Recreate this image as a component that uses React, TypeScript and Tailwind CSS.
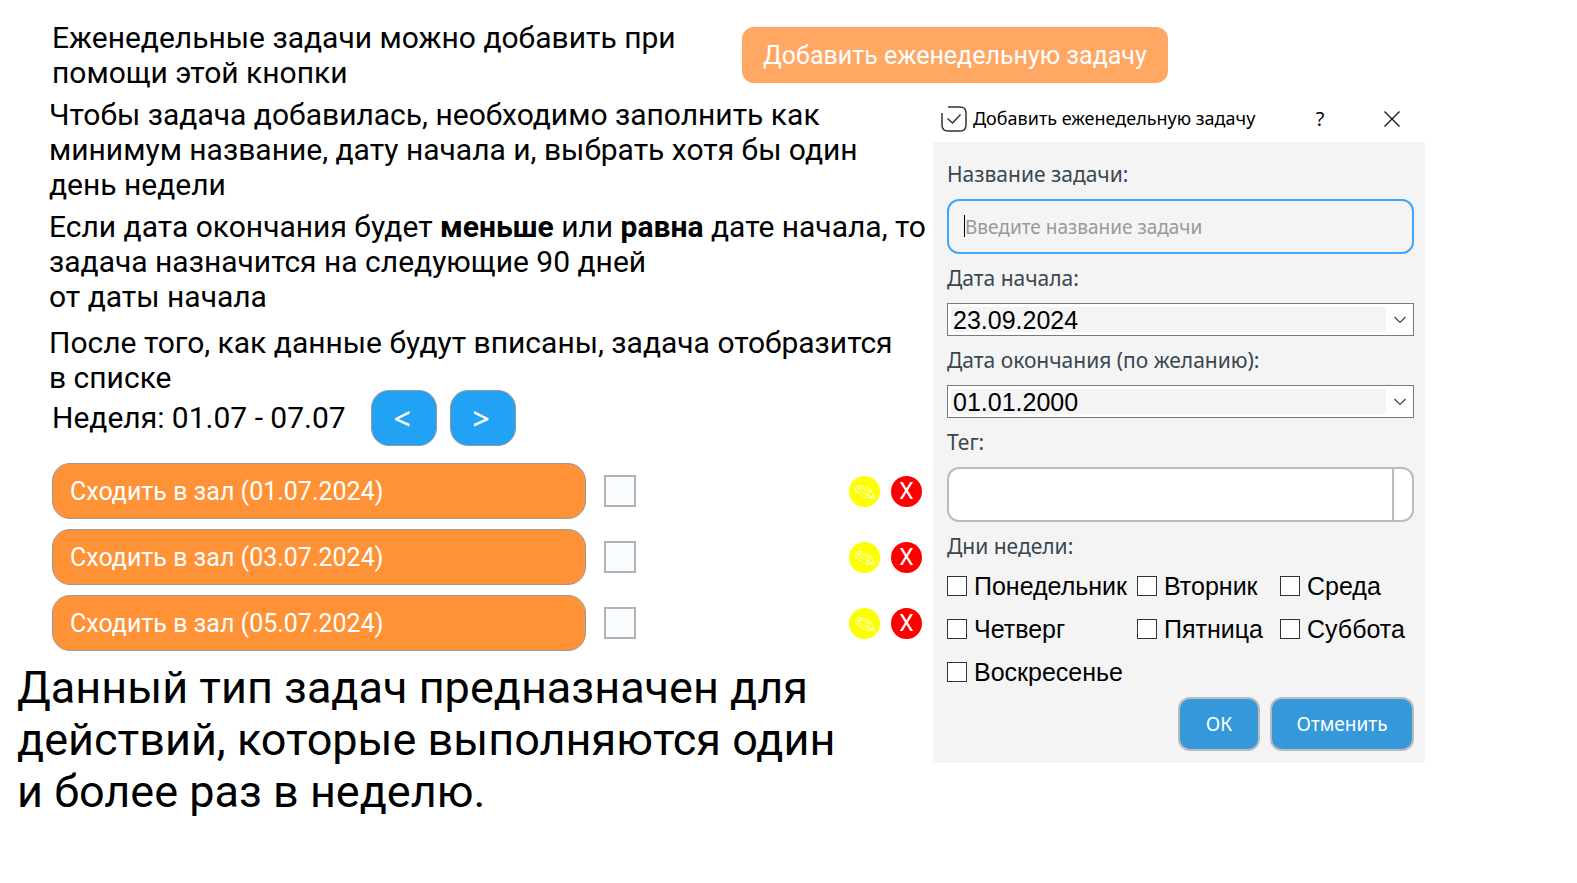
import { useState } from "react";
import type { ReactNode } from "react";

const tasks = [
  { id: "t1", title: "Сходить в зал (01.07.2024)" },
  { id: "t2", title: "Сходить в зал (03.07.2024)" },
  { id: "t3", title: "Сходить в зал (05.07.2024)" },
];

const days = ["Понедельник", "Вторник", "Среда", "Четверг", "Пятница", "Суббота", "Воскресенье"];

function PencilIcon() {
  return (
    <svg viewBox="0 0 32 32" className="size-8" fill="none" stroke="#fff" strokeWidth="0.8" strokeLinejoin="round" aria-hidden="true">
      <path d="M10.5 9.8 L22.5 14.800 L26.500 23.500 L16.500 22.800 L7 16.500 C5.500 13.500 7.500 9.800 10.500 9.800 Z" />
      <path d="M10.500 9.800 C12.500 11 11.500 15.500 7 16.500 M12 12.800 L21.500 17.200 M10.500 15.500 L19 20 M22.500 14.800 L21.500 17.200 L19 20 L16.500 22.800 M19 20 L26.500 23.500 M24.500 20 L23 23" />
      <path d="M8.500 12 L10 14 M10 12 L8.500 14" />
    </svg>
  );
}

function TaskRow({ id, title }: { id: string; title: string }) {
  return (
    <li className="flex items-center">
      <label htmlFor={id} className="flex h-14 w-[534px] items-center rounded-[18px] border border-[#999] bg-[#ff9236] px-[17px] text-[25px] text-white">
        {title}
      </label>
      <input id={id} type="checkbox" className="ml-[18px] size-8 appearance-none border-2 border-[#b2b2b2] bg-[#f8fcff] checked:bg-[#22a2f4]" />
      <div className="ml-auto flex gap-[11px]">
        <button type="button" aria-label="Изменить" className="flex size-[31px] items-center justify-center rounded-full bg-[#fbff00]">
          <PencilIcon />
        </button>
        <button type="button" aria-label="Удалить" className="flex size-[31px] items-center justify-center rounded-full bg-[#ff0000] text-[23px] text-white">
          X
        </button>
      </div>
    </li>
  );
}

function FieldLabel({ htmlFor, children }: { htmlFor?: string; children: ReactNode }) {
  return (
    <label htmlFor={htmlFor} className="flex h-[49px] items-center font-['Noto_Sans',sans-serif] text-[21px] text-[#37474f]">
      {children}
    </label>
  );
}

function DateField({ id, value }: { id: string; value: string }) {
  return (
    <div className="relative h-[33px] border border-[#7a7a7a] bg-white p-[3px]">
      <select id={id} defaultValue={value} className="block h-full w-full appearance-none border-r-[24px] border-white bg-[#f4f4f4] pl-[2px] font-['Liberation_Sans',sans-serif] text-[25px] leading-[27px] text-black outline-none">
        <option>{value}</option>
      </select>
      <svg viewBox="0 0 12 8" className="pointer-events-none absolute top-3 right-[7px] h-2 w-3" fill="none" stroke="#444" strokeWidth="1.2" aria-hidden="true">
        <path d="M0.500 1 L6 6.500 L11.500 1" />
      </svg>
    </div>
  );
}

function WeeklyTaskDialog() {
  const [name, setName] = useState("");
  return (
    <section aria-labelledby="dialog-title" className="w-[492px] shrink-0 font-['Noto_Sans',sans-serif]">
      <header className="flex h-[45px] items-center pb-[2px] pl-2">
        <svg viewBox="0 0 26 26" className="size-[26px]" fill="none" stroke="#333" strokeWidth="1.500" aria-hidden="true">
          <path d="M7 1 H19 Q25 1 25 7 V19 Q25 25 19 25 H7 Q1 25 1 19 V7" />
          <path d="M6.500 12.500 L11.500 17 L19.500 8.500" />
        </svg>
        <h2 id="dialog-title" className="ml-[6px] text-[18px] whitespace-nowrap text-black">
          Добавить еженедельную задачу
        </h2>
        <button type="button" aria-label="Справка" className="ml-auto flex w-[70px] justify-center text-[20px] text-black">
          ?
        </button>
        <button type="button" aria-label="Закрыть" className="flex w-[70px] justify-center pl-1">
          <svg viewBox="0 0 16 16" className="size-4" stroke="#111" strokeWidth="1.300" aria-hidden="true">
            <path d="M0.500 0.500 L15.500 15.500 M15.500 0.500 L0.500 15.500" />
          </svg>
        </button>
      </header>
      <form className="bg-[#f4f4f4] pt-2 pr-[11px] pb-3 pl-[14px]" onSubmit={(e) => e.preventDefault()}>
        <FieldLabel htmlFor="task-name">Название задачи:</FieldLabel>
        <div className="relative">
          <input
            id="task-name"
            value={name}
            onChange={(e) => setName(e.target.value)}
            placeholder="Введите название задачи"
            className="block h-[55px] w-full rounded-xl border-2 border-[#42a5f5] bg-[#f4f4f4] px-4 text-[19px] text-black outline-none placeholder:text-[#999]"
          />
          <span className="absolute top-4 left-[17px] h-[22px] w-px bg-black" />
        </div>
        <FieldLabel htmlFor="date-start">Дата начала:</FieldLabel>
        <DateField id="date-start" value="23.09.2024" />
        <FieldLabel htmlFor="date-end">Дата окончания (по желанию):</FieldLabel>
        <DateField id="date-end" value="01.01.2000" />
        <FieldLabel htmlFor="tag">Тег:</FieldLabel>
        <div className="flex h-[55px] overflow-hidden rounded-xl border-2 border-[#bbb] bg-white">
          <select id="tag" className="flex-1 appearance-none px-4 text-[19px] outline-none">
            <option></option>
          </select>
          <span className="w-5 border-l-2 border-[#bbb]" />
        </div>
        <fieldset>
          <legend className="flex h-12 items-center text-[21px] text-[#37474f]">Дни недели:</legend>
          <div className="grid grid-cols-[190px_143px_1fr] gap-y-[15px] pt-[2px] pb-1 font-['Liberation_Sans',sans-serif] text-[25px] leading-7 text-black">
            {days.map((day) => (
              <label key={day} className="flex h-7 items-center gap-[7px] whitespace-nowrap">
                <input type="checkbox" className="size-5 shrink-0 appearance-none border border-[#333] bg-white checked:bg-[#3498db]" />
                {day}
              </label>
            ))}
          </div>
        </fieldset>
        <div className="mt-[7px] flex justify-end gap-[10px] text-[19px] text-white">
          <button type="submit" className="h-[54px] w-[82px] rounded-xl border-2 border-[#bbb] bg-[#3498db]">
            ОК
          </button>
          <button type="button" className="h-[54px] w-36 rounded-xl border-2 border-[#bbb] bg-[#3498db]">
            Отменить
          </button>
        </div>
      </form>
    </section>
  );
}

export default function App() {
  return (
    <main className="min-h-screen bg-white font-[Roboto,sans-serif] text-[30px] leading-[35px] text-black">
      <div className="flex items-start pt-5 pl-[52px]">
        <p className="w-[690px] shrink-0">
          Еженедельные задачи можно добавить при
          <br />
          помощи этой кнопки
        </p>
        <button type="button" className="mt-[7px] h-14 rounded-xl bg-[#ffa763] px-[21px] text-[25px] whitespace-nowrap text-white">
          Добавить еженедельную задачу
        </button>
      </div>
      <div className="mt-[7px] flex items-start">
        <div className="w-[933px] shrink-0">
          <div className="pl-[49px] whitespace-nowrap">
            <p>
              Чтобы задача добавилась, необходимо заполнить как
              <br />
              минимум название, дату начала и, выбрать хотя бы один
              <br />
              день недели
            </p>
            <p className="mt-[7px]">
              Если дата окончания будет <b>меньше</b> или <b>равна</b> дате начала, то
              <br />
              задача назначится на следующие 90 дней
              <br />
              от даты начала
            </p>
            <p className="mt-[11px]">
              После того, как данные будут вписаны, задача отобразится
              <br />в списке
            </p>
          </div>
          <div className="pr-[11px] pl-[52px]">
            <div className="-mt-[5px] flex items-center gap-[13px]">
              <span className="w-[306px] pb-[2px] whitespace-nowrap">Неделя: 01.07 - 07.07</span>
              <button type="button" aria-label="Предыдущая неделя" className="h-14 w-[66px] rounded-[18px] border border-[#999] bg-[#22a2f4] pr-1 font-['Noto_Sans',sans-serif] font-medium text-white">
                &lt;
              </button>
              <button type="button" aria-label="Следующая неделя" className="h-14 w-[66px] rounded-[18px] border border-[#999] bg-[#22a2f4] pr-1 font-['Noto_Sans',sans-serif] font-medium text-white">
                &gt;
              </button>
            </div>
            <ul className="mt-[17px] flex flex-col gap-[10px]">
              {tasks.map((task) => (
                <TaskRow key={task.id} id={task.id} title={task.title} />
              ))}
            </ul>
          </div>
          <p className="mt-[11px] pl-[17px] text-[45px] leading-[52px] whitespace-nowrap">
            Данный тип задач предназначен для
            <br />
            действий, которые выполняются один
            <br />и более раз в неделю.
          </p>
        </div>
        <WeeklyTaskDialog />
      </div>
    </main>
  );
}
